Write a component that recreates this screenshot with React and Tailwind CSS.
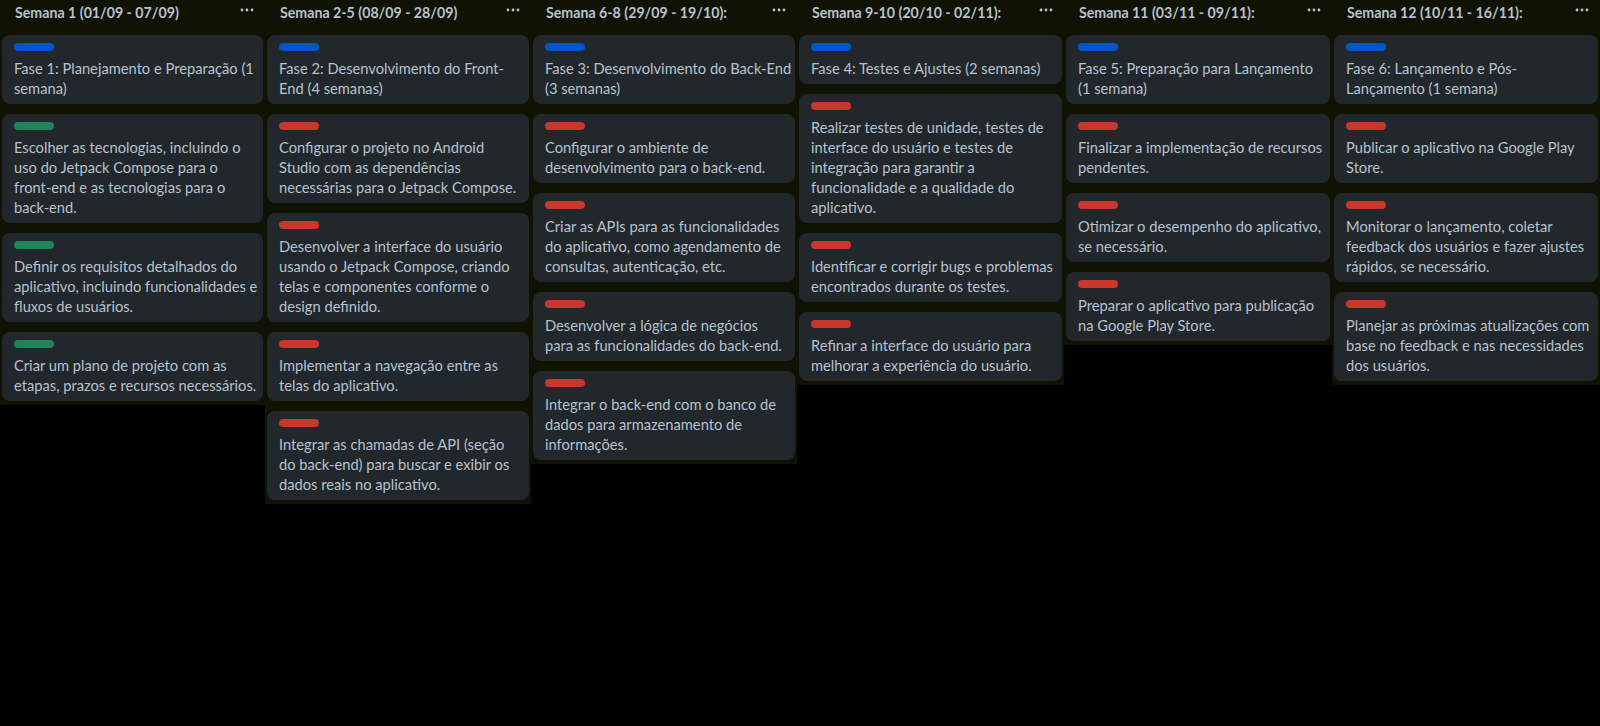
import React from "react";

const LABEL_COLORS = {
  blue: "bg-[#0055cc]",
  green: "bg-[#1f845a]",
  red: "bg-[#c9372c]",
};

// lines are split where the board wraps them
const LISTS = [
  {
    title: "Semana 1 (01/09 - 07/09)",
    width: "w-[265px]",
    cards: [
      { label: "blue", lines: ["Fase 1: Planejamento e Preparação (1", "semana)"] },
      { label: "green", lines: ["Escolher as tecnologias, incluindo o", "uso do Jetpack Compose para o", "front-end e as tecnologias para o", "back-end."] },
      { label: "green", lines: ["Definir os requisitos detalhados do", "aplicativo, incluindo funcionalidades e", "fluxos de usuários."] },
      { label: "green", lines: ["Criar um plano de projeto com as", "etapas, prazos e recursos necessários."] },
    ],
  },
  {
    title: "Semana 2-5 (08/09 - 28/09)",
    width: "w-[266px]",
    cards: [
      { label: "blue", lines: ["Fase 2: Desenvolvimento do Front-", "End (4 semanas)"] },
      { label: "red", lines: ["Configurar o projeto no Android", "Studio com as dependências", "necessárias para o Jetpack Compose."] },
      { label: "red", lines: ["Desenvolver a interface do usuário", "usando o Jetpack Compose, criando", "telas e componentes conforme o", "design definido."] },
      { label: "red", lines: ["Implementar a navegação entre as", "telas do aplicativo."] },
      { label: "red", lines: ["Integrar as chamadas de API (seção", "do back-end) para buscar e exibir os", "dados reais no aplicativo."] },
    ],
  },
  {
    title: "Semana 6-8 (29/09 - 19/10):",
    width: "w-[266px]",
    cards: [
      { label: "blue", lines: ["Fase 3: Desenvolvimento do Back-End", "(3 semanas)"] },
      { label: "red", lines: ["Configurar o ambiente de", "desenvolvimento para o back-end."] },
      { label: "red", lines: ["Criar as APIs para as funcionalidades", "do aplicativo, como agendamento de", "consultas, autenticação, etc."] },
      { label: "red", lines: ["Desenvolver a lógica de negócios", "para as funcionalidades do back-end."] },
      { label: "red", lines: ["Integrar o back-end com o banco de", "dados para armazenamento de", "informações."] },
    ],
  },
  {
    title: "Semana 9-10 (20/10 - 02/11):",
    width: "w-[267px]",
    cards: [
      { label: "blue", lines: ["Fase 4: Testes e Ajustes (2 semanas)"] },
      { label: "red", lines: ["Realizar testes de unidade, testes de", "interface do usuário e testes de", "integração para garantir a", "funcionalidade e a qualidade do", "aplicativo."] },
      { label: "red", lines: ["Identificar e corrigir bugs e problemas", "encontrados durante os testes."] },
      { label: "red", lines: ["Refinar a interface do usuário para", "melhorar a experiência do usuário."] },
    ],
  },
  {
    title: "Semana 11 (03/11 - 09/11):",
    width: "w-[268px]",
    cards: [
      { label: "blue", lines: ["Fase 5: Preparação para Lançamento", "(1 semana)"] },
      { label: "red", lines: ["Finalizar a implementação de recursos", "pendentes."] },
      { label: "red", lines: ["Otimizar o desempenho do aplicativo,", "se necessário."] },
      { label: "red", lines: ["Preparar o aplicativo para publicação", "na Google Play Store."] },
    ],
  },
  {
    title: "Semana 12 (10/11 - 16/11):",
    width: "w-[268px]",
    cards: [
      { label: "blue", lines: ["Fase 6: Lançamento e Pós-", "Lançamento (1 semana)"] },
      { label: "red", lines: ["Publicar o aplicativo na Google Play", "Store."] },
      { label: "red", lines: ["Monitorar o lançamento, coletar", "feedback dos usuários e fazer ajustes", "rápidos, se necessário."] },
      { label: "red", lines: ["Planejar as próximas atualizações com", "base no feedback e nas necessidades", "dos usuários."] },
    ],
  },
];

function Dots() {
  return (
    <svg width="14" height="4" viewBox="0 0 14 4" className="text-[#b6c2cf]">
      <circle cx="2" cy="2" r="1.4" fill="currentColor" />
      <circle cx="7" cy="2" r="1.4" fill="currentColor" />
      <circle cx="12" cy="2" r="1.4" fill="currentColor" />
    </svg>
  );
}

function Card({ label, lines }) {
  return (
    <div className="rounded-lg bg-[#22272b] pt-2 pb-[6px] pl-3 pr-1 mb-[10px] last:mb-0">
      <div className={`h-2 w-10 rounded-full ${LABEL_COLORS[label]}`} />
      <p className="mt-[7px] whitespace-nowrap text-[14.7px] leading-[20px] text-[#b6c2cf]">
        {lines.map((line, i) => (
          <span key={i} className="block">{line}</span>
        ))}
      </p>
    </div>
  );
}

function List({ title, width, cards }) {
  return (
    <div className={`${width} shrink-0 self-start bg-[#101204] px-[2px] pb-1`}>
      <div className="flex h-[35px] items-start justify-between pl-[13px] pr-[9px] pt-[3px]">
        <h2 className="text-[14.2px] font-bold leading-[20px] text-[#b6c2cf]">{title}</h2>
        <div className="pt-[5px]">
          <Dots />
        </div>
      </div>
      {cards.map((c, i) => (
        <Card key={i} label={c.label} lines={c.lines} />
      ))}
    </div>
  );
}

export default function App() {
  return (
    <div className="flex min-h-[726px] w-[1600px] items-start bg-black font-['Lato',sans-serif]">
      {LISTS.map((l) => (
        <List key={l.title} {...l} />
      ))}
    </div>
  );
}
